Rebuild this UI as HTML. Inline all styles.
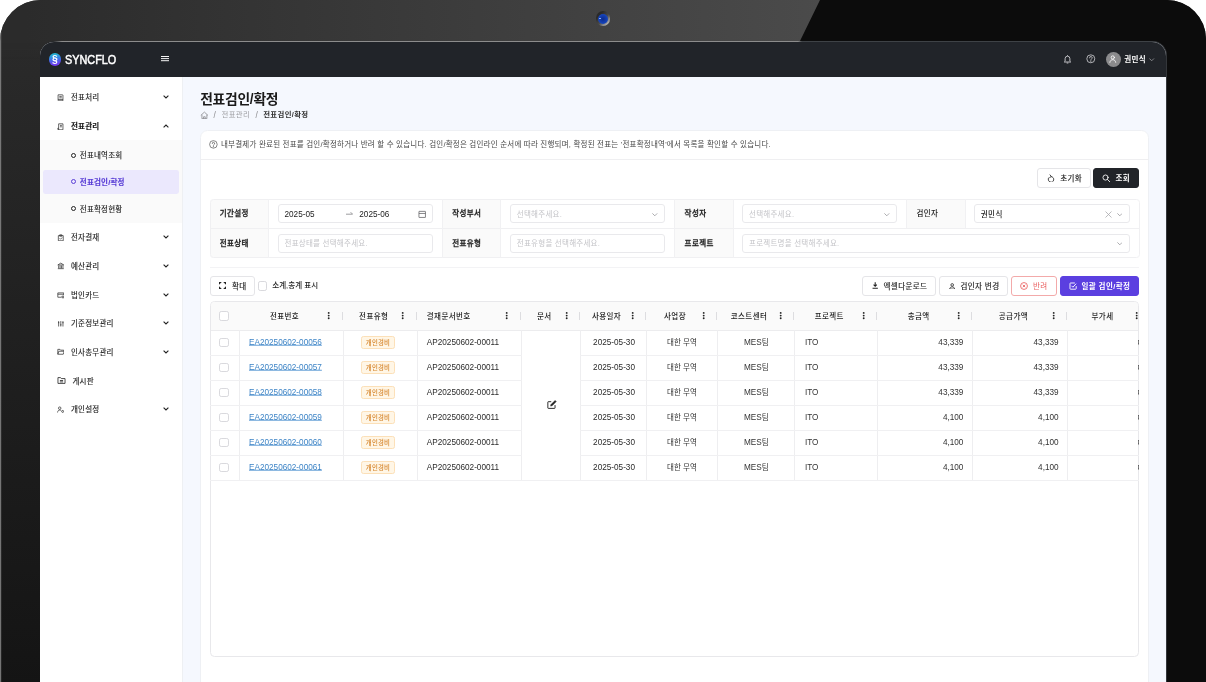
<!DOCTYPE html><html lang="ko"><head><meta charset="utf-8"><title>전표검인/확정</title><style>
*{box-sizing:border-box;margin:0;padding:0}
html,body{width:1206px;height:682px;overflow:hidden;background:#fff}
body{position:relative;font-family:"Liberation Sans","Noto Sans CJK KR",sans-serif;color:#222;-webkit-font-smoothing:antialiased}
.a{position:absolute}
.k{font-size:7.5px;letter-spacing:0.4px;white-space:nowrap;line-height:10px;padding-top:1.500px}
.n{font-size:8.2px;letter-spacing:0;white-space:nowrap;line-height:10px;padding-top:.5px}
.b{font-weight:700}
.m{font-weight:500}
.sb{font-weight:500;-webkit-text-stroke:.28px currentColor}
#dev{left:0;top:0;width:1206px;height:760px;border-radius:41px 39px 0 0;overflow:hidden;
 background:linear-gradient(180deg,#2b2b2b 0%,#2a2a2a 6%,#141414 90%)}
#scr{left:40px;top:41.900px;width:1126px;height:700px;border-radius:14px 14px 0 0;overflow:hidden;background:#f5f8fe}
#pg{left:-40px;top:-41.900px;width:1206px;height:760px;will-change:transform}
.mi{left:40px;width:142px;height:28.7px}
.mi .tx{left:31px;top:50%;transform:translateY(-50%);margin-top:.5px;letter-spacing:.2px;-webkit-text-stroke:.14px currentColor;color:#1c1c1c}
.mi svg.ic{position:absolute;left:16.800px;top:50%;margin-top:-3.700px;width:7.600px;height:7.600px}
.mi svg.ch{position:absolute;left:123px;top:50%;margin-top:-2px;width:6px;height:4px}
.sm .tx{left:39.8px}
.sm .bu{position:absolute;left:30.800px;top:50%;margin-top:-2.300px;width:5px;height:5px;border:.95px solid #333;border-radius:50%}
.lab{background:#fafafa;width:58.4px;height:29.3px}
.lab span{position:absolute;left:10.2px;top:50%;transform:translateY(-50%)}
.inp{height:19.200px;border:1px solid #e9e9ec;border-radius:3px;background:#fff}
.inp span{position:absolute;left:5.600px;top:50%;transform:translateY(-50%);margin-top:.35px}
.ph{color:#c4c4c8;letter-spacing:0.25px}
.btn{height:19.6px;border:1px solid #e5e5e8;border-radius:3px;background:#fff;display:flex;align-items:center;justify-content:center;top:276.1px}
.btn svg{margin-right:4.500px}
.btn .w{-webkit-text-stroke:.16px currentColor;margin-left:.9px;margin-right:-.9px}
.cb{width:9.4px;height:9.4px;border:1px solid #d9d9dd;border-radius:2.2px;background:#fff}
.hs{top:311.8px;width:1.400px;height:8px;background:#dddde0}
.hd{top:312.4px;width:1.400px;height:7px;overflow:visible}
.vb{top:330.3px;width:1px;background:#eeeef0}
.hb{left:209.5px;height:1px;background:#f0f0f2}
.tc{transform:translate(-50%,-50%)}
.tl{transform:translateY(-50%)}
.tr{transform:translate(-100%,-50%)}
.bdg{width:34px;height:12.6px;border:1px solid #fce0b8;background:#fff6e6;border-radius:2.4px;color:#d6852a;font-size:6.4px;letter-spacing:0.2px;line-height:12px;text-align:center;white-space:nowrap}
</style></head><body>
<div id="dev" class="a">
<div class="a" style="left:0;top:0;width:830px;height:60px;background:linear-gradient(90deg,#2b2b2b 0%,#2b2b2b 3%,#4b4b4b 100%);-webkit-mask-image:linear-gradient(180deg,#000 0,#000 40px,transparent 60px)"></div>
<svg class="a" style="left:0;top:0" width="1206" height="760"><polygon points="820,0 1206,0 1206,760 1166,760 1166,42 799.500,42" fill="#0c0c0c"/><rect x="1140" y="40" width="28" height="30" fill="#0c0c0c"/><rect x="0" y="32" width="1.200" height="740" fill="#8c8c8c" opacity=".8"/></svg>
<div class="a" style="left:596px;top:11.3px;width:14.4px;height:14.4px;border-radius:50%;background:linear-gradient(135deg,#2a2a2a 25%,#4a4a4a 55%,#9a9a9a 78%,#f0f0f0 100%)"></div>
<div class="a" style="left:598.2px;top:13.5px;width:10px;height:10px;border-radius:50%;background:radial-gradient(circle at 50% 50%,#0b2a8c 0%,#1440b4 55%,#1f52cc 100%)"></div>
<div class="a" style="left:599.300px;top:17.900px;width:1.500px;height:1.500px;border-radius:50%;background:#9cc0ff"></div>
<div class="a" style="left:40px;top:40.900px;width:1126.700px;height:730px;border-radius:14.500px 14.500px 0 0;background:linear-gradient(90deg,#27292c 0,#27292c 13px,#8c8c8c 22px,#8c8c8c 758px,#3e4246 762px,#3e4246 1112px,#33363a 1126px)"></div>
</div>
<div id="scr" class="a"><div id="pg" class="a">
<div class="a" style="left:40px;top:41px;width:1126px;height:36.400px;background:#212429"></div>
<div class="a" style="left:48.500px;top:53.200px;width:12.600px;height:12.600px;border-radius:50%;background:linear-gradient(172deg,#22c4cc 0%,#2c9adf 28%,#4766e8 55%,#6a40ee 80%,#7a36f2 100%)"></div>
<div class="a b" style="left:54.800px;top:59.500px;transform:translate(-50%,-50%);color:#fff;font-size:10.400px;line-height:1">§</div>
<div class="a" style="left:65.200px;top:59.700px;transform:translateY(-50%) scaleX(.855);transform-origin:0 50%;color:#fff;font-size:12.700px;line-height:1;letter-spacing:0;-webkit-text-stroke:.5px #fff">SYNCFLO</div>
<svg class="a" style="left:161px;top:56px" width="8" height="6" viewBox="0 0 8 6"><path d="M0 .5h8M0 2.600h8M0 4.700h8" stroke="#f4f4f4" stroke-width="1"/></svg>
<svg class="a" style="left:1062.5px;top:53.500px" width="9" height="10" viewBox="0 0 18 20" fill="none" stroke="#c4c4c8" stroke-width="1.9" stroke-linejoin="round"><path d="M9 2.2v1.6M4.2 14.5V9.3a4.8 4.8 0 019.6 0v5.2l1.6 1.5H2.6zM7.3 18h3.4" /></svg>
<svg class="a" style="left:1086.2px;top:54.2px" width="9.6" height="9.6" viewBox="0 0 20 20" fill="none" stroke="#cfcfd3" stroke-width="1.7"><circle cx="10" cy="10" r="8.3"/><path d="M7.4 8.1a2.7 2.7 0 115 1.3c-.7 1-2.3 1.3-2.3 2.9M10 14.2v1.4" stroke-linecap="round"/></svg>
<div class="a" style="left:1105.6px;top:51.9px;width:15.2px;height:15.2px;border-radius:50%;background:#8b8b8d"></div>
<svg class="a" style="left:1109.4px;top:55.4px" width="7.6" height="8" viewBox="0 0 16 17" fill="none" stroke="#fff" stroke-width="1.8" stroke-linecap="round"><circle cx="8" cy="5.2" r="3.4"/><path d="M1.8 15.6c.5-3.6 2.9-5.6 6.2-5.6s5.700 2 6.200 5.600"/></svg>
<div class="a k b" style="left:1124.2px;top:59.4px;transform:translateY(-50%);color:#fff;font-size:7.5px">권민식</div>
<svg class="a" style="left:1149.2px;top:57.8px" width="5.4" height="3.4" viewBox="0 0 5.4 3.4"><path d="M.4.5l2.300 2.300L5 .5" fill="none" stroke="#9a9ca0" stroke-width=".8"/></svg>
<div class="a" style="left:40px;top:77.200px;width:142.800px;height:700px;background:#fff;border-right:1px solid #eef0f3"></div>
<div class="a" style="left:40px;top:140.2px;width:142px;height:83.2px;background:#fafafa"></div>
<div class="a" style="left:43px;top:170px;width:135.800px;height:23.7px;background:#ebe8fd;border-radius:2.4px"></div>
<div class="a mi" style="top:83.15px"><svg class="ic" viewBox="0 0 14 14" fill="none" stroke="#2a2a2a" stroke-width="1.300" stroke-linejoin="round"><path d="M2 1.500h8a1 1 0 011 1V12.500H3a1 1 0 01-1-1zM4.300 4.500h4.500M4.300 7h4.500M2 10h9" /></svg><span class="a tx k ">전표처리</span><svg class="ch" viewBox="0 0 6 4"><path d="M.6.600L3 3l2.400-2.400" fill="none" stroke="#222" stroke-width="1.1"/></svg></div>
<div class="a mi" style="top:111.95px"><svg class="ic" viewBox="0 0 14 14" fill="none" stroke="#2a2a2a" stroke-width="1.300" stroke-linejoin="round"><path d="M3 1.500h8v11H3zM3 9.500H1.500v2.000a1 1 0 001 1H4M5.500 4.500h3.500M5.500 7h3.500"/></svg><span class="a tx k b">전표관리</span><svg class="ch" viewBox="0 0 6 4"><path d="M.6 3.400L3 1l2.400 2.400" fill="none" stroke="#222" stroke-width="1.1"/></svg></div>
<div class="a mi sm" style="top:140.85px"><i class="bu" style="border-color:#222"></i><span class="a tx k " style="color:#222">전표내역조회</span></div>
<div class="a mi sm" style="top:167.45px"><i class="bu" style="border-color:#5a3fd6"></i><span class="a tx k b" style="color:#5a3fd6">전표검인/확정</span></div>
<div class="a mi sm" style="top:194.35px"><i class="bu" style="border-color:#222"></i><span class="a tx k " style="color:#222">전표확정현황</span></div>
<div class="a mi" style="top:222.95px"><svg class="ic" viewBox="0 0 14 14" fill="none" stroke="#2a2a2a" stroke-width="1.300" stroke-linejoin="round"><path d="M2.500 3h9v9.500h-9zM5 1.500h4v2.500H5zM4.800 8l1.700 1.700L9.500 6.500"/></svg><span class="a tx k ">전자결재</span><svg class="ch" viewBox="0 0 6 4"><path d="M.6.600L3 3l2.400-2.400" fill="none" stroke="#222" stroke-width="1.1"/></svg></div>
<div class="a mi" style="top:251.55px"><svg class="ic" viewBox="0 0 14 14" fill="none" stroke="#2a2a2a" stroke-width="1.300" stroke-linejoin="round"><path d="M1.500 5.500L7 2l5.500 3.500zM3 6.500v5M5.700 6.500v5M8.300 6.500v5M11 6.500v5M1.500 12.300h11"/></svg><span class="a tx k ">예산관리</span><svg class="ch" viewBox="0 0 6 4"><path d="M.6.600L3 3l2.400-2.400" fill="none" stroke="#222" stroke-width="1.1"/></svg></div>
<div class="a mi" style="top:280.25px"><svg class="ic" viewBox="0 0 14 14" fill="none" stroke="#2a2a2a" stroke-width="1.300" stroke-linejoin="round"><path d="M1.500 3.500h11v4M1.500 3.500v8h6M1.500 6h11M9 9.500h4v3H9z"/></svg><span class="a tx k ">법인카드</span><svg class="ch" viewBox="0 0 6 4"><path d="M.6.600L3 3l2.400-2.400" fill="none" stroke="#222" stroke-width="1.1"/></svg></div>
<div class="a mi" style="top:308.95px"><svg class="ic" viewBox="0 0 14 14" fill="none" stroke="#2a2a2a" stroke-width="1.300" stroke-linejoin="round"><path d="M3 2v10M7 2v10M11 2v10M1.800 5h2.400M5.800 9h2.400M9.800 5h2.400"/></svg><span class="a tx k ">기준정보관리</span><svg class="ch" viewBox="0 0 6 4"><path d="M.6.600L3 3l2.400-2.400" fill="none" stroke="#222" stroke-width="1.1"/></svg></div>
<div class="a mi" style="top:337.55px"><svg class="ic" viewBox="0 0 14 14" fill="none" stroke="#2a2a2a" stroke-width="1.300" stroke-linejoin="round"><path d="M1.500 11.500V2.500h4l1.200 1.500h5.800v2M1.500 11.500l1.800-5.500h10l-1.800 5.500z"/></svg><span class="a tx k ">인사총무관리</span><svg class="ch" viewBox="0 0 6 4"><path d="M.6.600L3 3l2.400-2.400" fill="none" stroke="#222" stroke-width="1.1"/></svg></div>
<div class="a mi" style="top:366.25px"><svg class="ic" style="width:9px;height:9px;margin-top:-4.400px;left:16.600px" viewBox="0 0 14 14" fill="none" stroke="#2a2a2a" stroke-width="1.300" stroke-linejoin="round"><path d="M1.500 11.500V2.500h4l1.200 1.500h5.800v7.500zM4.500 7h5M4.500 9.200h5"/></svg><span class="a tx k " style="left:32.5px">게시판</span></div>
<div class="a mi" style="top:394.95px"><svg class="ic" viewBox="0 0 14 14" fill="none" stroke="#2a2a2a" stroke-width="1.300" stroke-linejoin="round"><circle cx="5" cy="4" r="2.300"/><path d="M1 12c.3-3 1.800-4.500 4-4.500 1.300 0 2.300.5 3 1.500"/><circle cx="10.500" cy="10" r="1.800"/></svg><span class="a tx k ">개인설정</span><svg class="ch" viewBox="0 0 6 4"><path d="M.6.600L3 3l2.400-2.400" fill="none" stroke="#222" stroke-width="1.1"/></svg></div>
<div class="a b" style="left:200.2px;top:99.900px;transform:translateY(-50%);font-size:13.8px;letter-spacing:-0.28px;line-height:1;color:#1a1a1a;white-space:nowrap">전표검인/확정</div>
<svg class="a" style="left:199.900px;top:110.500px" width="8.800" height="8.800" viewBox="0 0 16 16" fill="none" stroke="#77777b" stroke-width="1.250" stroke-linejoin="round"><path d="M1.500 8L8 2l6.500 6M3.500 6.800V14h9V6.800M6.500 14v-3.500h3V14"/></svg>
<div class="a k" style="left:213.5px;top:114.8px;transform:translateY(-50%);color:#8a8a8e;font-size:8.400px">/</div>
<div class="a k" style="left:221.6px;top:114.8px;transform:translateY(-50%);color:#9c9ca0;font-size:7.4px;letter-spacing:0.3px">전표관리</div>
<div class="a k" style="left:255.6px;top:114.8px;transform:translateY(-50%);color:#8a8a8e;font-size:8.400px">/</div>
<div class="a k b" style="left:263.2px;top:114.8px;transform:translateY(-50%);color:#333;font-size:7.4px;letter-spacing:0.35px">전표검인/확정</div>
<div class="a" style="left:200.3px;top:130.3px;width:948.3px;height:640px;background:#fff;border:1px solid #eef0f4;border-radius:7.5px"></div>
<div class="a" style="left:200.3px;top:159px;width:948.3px;height:1px;background:#efeff1"></div>
<svg class="a" style="left:209.400px;top:140.200px" width="8.800" height="8.800" viewBox="0 0 20 20" fill="none" stroke="#4a4a4a" stroke-width="1.500"><circle cx="10" cy="10" r="8.600"/><path d="M7.400 8.100a2.700 2.700 0 115 1.300c-.7 1-2.300 1.300-2.300 2.900M10 14.400v1.200" stroke-linecap="round"/></svg>
<div class="a k" style="left:221px;top:144.6px;transform:translateY(-50%);color:#484848;font-size:7.5px;letter-spacing:0.22px">내부결제가 완료된 전표를 검인/확정하거나 반려 할 수 있습니다. 검인/확정은 검인라인 순서에 따라 진행되며, 확정된 전표는 '전표확정내역'에서 목록을 확인할 수 있습니다.</div>
<div class="a btn" style="left:1037.400px;top:168.2px;width:53.300px"><svg width="7.800" height="8.900" viewBox="0 0 14 16" fill="none" stroke="#333" stroke-width="1.600" stroke-linecap="round"><path d="M7.600 4.600a5 5 0 1 1-4.900 2.600"/><path d="M5.400 1.600l2.400 3-3 1.800" stroke-linejoin="round"/></svg><span class="k w" style="color:#1c1c1c">초기화</span></div>
<div class="a btn" style="left:1093.1px;top:168.2px;width:46.2px;background:#212429;border-color:#212429"><svg width="8.600" height="8.600" viewBox="0 0 16 16" fill="none" stroke="#fff" stroke-width="1.600" stroke-linecap="round"><circle cx="6.600" cy="6.600" r="4.800"/><path d="M10.300 10.300L14.500 14.500"/></svg><span class="k b" style="color:#fff">조회</span></div>
<div class="a lab" style="left:209.50px;top:199.2px"></div>
<div class="a lab" style="left:441.95px;top:199.2px"></div>
<div class="a lab" style="left:674.40px;top:199.2px"></div>
<div class="a lab" style="left:906.30px;top:199.2px"></div>
<div class="a lab" style="left:209.50px;top:228.5px"></div>
<div class="a lab" style="left:441.95px;top:228.5px"></div>
<div class="a lab" style="left:674.40px;top:228.5px"></div>
<div class="a" style="left:209.5px;top:228.3px;width:929.8px;height:1px;background:#f0f0f2"></div>
<div class="a" style="left:209.5px;top:199.2px;width:930.300px;height:58.600px;border:1px solid #f0f0f2;border-radius:3.500px;box-shadow:0 0 0 2px #fff"></div>
<div class="a k sb" style="left:219.70px;top:213.8px;transform:translateY(-50%);color:#222">기간설정</div>
<div class="a k sb" style="left:452.15px;top:213.8px;transform:translateY(-50%);color:#222">작성부서</div>
<div class="a k sb" style="left:684.60px;top:213.8px;transform:translateY(-50%);color:#222">작성자</div>
<div class="a k m" style="left:916.50px;top:213.8px;transform:translateY(-50%);color:#222">검인자</div>
<div class="a k sb" style="left:219.70px;top:243.4px;transform:translateY(-50%);color:#222">전표상태</div>
<div class="a k sb" style="left:452.15px;top:243.4px;transform:translateY(-50%);color:#222">전표유형</div>
<div class="a k sb" style="left:684.60px;top:243.4px;transform:translateY(-50%);color:#222">프로젝트</div>
<div class="a inp" style="left:277.900px;top:204.100px;width:155px"><span class="n" style="color:#222">2025-05</span><span class="n" style="left:80.400px;color:#222">2025-06</span><svg class="a" style="left:67.600px;top:6.300px" width="7" height="5" viewBox="0 0 7 5" fill="none" stroke="#848488" stroke-width=".8"><path d="M0 3.200h6.600M4.600 1.200l2 2"/></svg><svg class="a" style="left:139.200px;top:5.400px" width="8.400" height="8.400" viewBox="0 0 16 16" fill="none" stroke="#5a5a5e" stroke-width="1.400"><rect x="1.800" y="2.600" width="12.400" height="11.600" rx=".4"/><path d="M1.800 6.600h12.400"/></svg></div>
<div class="a inp" style="left:510.200px;top:204.100px;width:155px"><span class="k ph">선택해주세요.</span><svg class="a" style="right:6.600px;top:7.600px" width="5.600" height="3.500" viewBox="0 0 5.600 3.500"><path d="M.4.400l2.400 2.400L5.200.4" fill="none" stroke="#97979b" stroke-width=".8"/></svg></div>
<div class="a inp" style="left:742.400px;top:204.100px;width:155px"><span class="k ph">선택해주세요.</span><svg class="a" style="right:6.600px;top:7.600px" width="5.600" height="3.500" viewBox="0 0 5.600 3.500"><path d="M.4.400l2.400 2.400L5.200.4" fill="none" stroke="#97979b" stroke-width=".8"/></svg></div>
<div class="a inp" style="left:974.200px;top:204.100px;width:155.800px"><span class="k m" style="color:#222">권민식</span><svg class="a" style="right:6.600px;top:7.600px" width="5.600" height="3.500" viewBox="0 0 5.600 3.500"><path d="M.4.400l2.400 2.400L5.200.4" fill="none" stroke="#97979b" stroke-width=".8"/></svg><svg class="a" style="right:17.200px;top:5.700px" width="7" height="7" viewBox="0 0 7 7"><path d="M.5.500l6 6M6.500.500l-6 6" stroke="#a6a6aa" stroke-width=".75"/></svg></div>
<div class="a inp" style="left:277.900px;top:233.800px;width:155px"><span class="k ph">전표상태를 선택해주세요.</span></div>
<div class="a inp" style="left:510.200px;top:233.800px;width:155px"><span class="k ph">전표유형을 선택해주세요.</span></div>
<div class="a inp" style="left:742.400px;top:233.800px;width:387.600px"><span class="k ph">프로젝트명을 선택해주세요.</span><svg class="a" style="right:6.600px;top:7.600px" width="5.600" height="3.500" viewBox="0 0 5.600 3.500"><path d="M.4.400l2.400 2.400L5.200.4" fill="none" stroke="#97979b" stroke-width=".8"/></svg></div>
<div class="a" style="left:267.70px;top:199.2px;width:1px;height:58.6px;background:#f1f1f3"></div>
<div class="a" style="left:500.15px;top:199.2px;width:1px;height:58.6px;background:#f1f1f3"></div>
<div class="a" style="left:441.65px;top:199.2px;width:1px;height:58.6px;background:#f1f1f3"></div>
<div class="a" style="left:732.60px;top:199.2px;width:1px;height:58.6px;background:#f1f1f3"></div>
<div class="a" style="left:674.10px;top:199.2px;width:1px;height:58.6px;background:#f1f1f3"></div>
<div class="a" style="left:964.50px;top:199.2px;width:1px;height:29.3px;background:#f1f1f3"></div>
<div class="a" style="left:906.00px;top:199.2px;width:1px;height:29.3px;background:#f1f1f3"></div>
<div class="a" style="left:209.5px;top:267px;width:929.8px;height:1px;background:#f3f3f5"></div>
<div class="a btn"  style="left:209.5px;width:45.2px"><svg style="margin-right:5.500px" width="7" height="7" viewBox="0 0 12 12" fill="#222"><path d="M0 0h4.800L0 4.800zM12 0v4.800L7.200 0zM0 12V7.200L4.800 12zM12 12H7.200L12 7.200z"/></svg><span class="k w" style="color:#1c1c1c">확대</span></div>
<div class="a cb" style="left:258px;top:281.2px"></div>
<div class="a k m" style="left:272.2px;top:285.9px;transform:translateY(-50%);color:#222;letter-spacing:0.05px">소계,총계 표시</div>
<div class="a btn" style="left:862.4px;width:73.500px"><svg width="6.400" height="7" viewBox="0 0 12 13" fill="none" stroke="#222" stroke-width="2"><path d="M6 .5v7M3 5l3 3 3-3M1 11.800h10"/></svg><span class="k w" style="color:#1c1c1c">엑셀다운로드</span></div>
<div class="a btn" style="left:939.3px;width:68.7px"><svg width="6.400" height="6.600" viewBox="0 0 12 13" fill="none" stroke="#333" stroke-width="1.700"><circle cx="6" cy="3.800" r="2.600"/><path d="M1 12c.4-3 2.300-4.300 5-4.300s4.600 1.300 5 4.300z"/></svg><span class="k w" style="color:#1c1c1c">검인자 변경</span></div>
<div class="a btn" style="left:1011.3px;width:45.4px;border-color:#f3aaaa"><svg width="8" height="8" viewBox="0 0 14 14" fill="none" stroke="#ea6464" stroke-width="1.500"><circle cx="7" cy="7" r="6"/><path d="M4.800 4.800l4.400 4.400M9.200 4.800l-4.400 4.400"/></svg><span class="k" style="color:#ea6262">반려</span></div>
<div class="a btn" style="left:1059.8px;width:79.5px;background:#5b3fe0;border-color:#5b3fe0"><svg width="8.200" height="8.200" viewBox="0 0 14 14" fill="none" stroke="#fff" stroke-width="1.600"><path d="M12.300 7v4.300a1 1 0 01-1 1H2.700a1 1 0 01-1-1V2.700a1 1 0 011-1H10M4.300 6.500l2.400 2.400 5.500-6"/></svg><span class="k b" style="color:#fff">일괄 검인/확정</span></div>
<div class="a" style="left:209.5px;top:301.2px;width:929.8px;height:356px;border:1px solid #e8e8eb;border-radius:4.500px;background:#fff;overflow:hidden"><div class="a" style="left:0;top:0;width:930px;height:29.100px;background:#fafafa;border-bottom:1px solid #ececee"></div></div>
<div class="a vb" style="left:239.10px;height:150.30px"></div>
<div class="a vb" style="left:343.00px;height:150.30px"></div>
<div class="a hs" style="left:341.90px"></div>
<div class="a vb" style="left:417.10px;height:150.30px"></div>
<div class="a hs" style="left:416.00px"></div>
<div class="a vb" style="left:521.10px;height:150.30px"></div>
<div class="a hs" style="left:520.00px"></div>
<div class="a vb" style="left:579.90px;height:150.30px"></div>
<div class="a hs" style="left:578.80px"></div>
<div class="a vb" style="left:646.00px;height:150.30px"></div>
<div class="a hs" style="left:644.90px"></div>
<div class="a vb" style="left:717.00px;height:150.30px"></div>
<div class="a hs" style="left:715.90px"></div>
<div class="a vb" style="left:794.00px;height:150.30px"></div>
<div class="a hs" style="left:792.90px"></div>
<div class="a vb" style="left:877.00px;height:150.30px"></div>
<div class="a hs" style="left:875.90px"></div>
<div class="a vb" style="left:972.00px;height:150.30px"></div>
<div class="a hs" style="left:970.90px"></div>
<div class="a vb" style="left:1067.10px;height:150.30px"></div>
<div class="a hs" style="left:1066.00px"></div>
<div class="a hb" style="top:354.85px;width:312.10px"></div>
<div class="a hb" style="top:354.85px;left:580.4px;width:558.40px"></div>
<div class="a hb" style="top:379.90px;width:312.10px"></div>
<div class="a hb" style="top:379.90px;left:580.4px;width:558.40px"></div>
<div class="a hb" style="top:404.95px;width:312.10px"></div>
<div class="a hb" style="top:404.95px;left:580.4px;width:558.40px"></div>
<div class="a hb" style="top:430.00px;width:312.10px"></div>
<div class="a hb" style="top:430.00px;left:580.4px;width:558.40px"></div>
<div class="a hb" style="top:455.05px;width:312.10px"></div>
<div class="a hb" style="top:455.05px;left:580.4px;width:558.40px"></div>
<div class="a hb" style="top:480.10px;width:929.30px"></div>
<div class="a cb" style="left:219.3px;top:311.3px"></div>
<div class="a k m tc" style="left:284.50px;top:316.00px;color:#222">전표번호</div>
<svg class="a hd" style="left:328.10px" width="1.400" height="7" viewBox="0 0 1.400 7"><circle cx=".7" cy=".9" r=".95" fill="#222"/><circle cx=".7" cy="3.600" r=".95" fill="#222"/><circle cx=".7" cy="6.300" r=".95" fill="#222"/></svg>
<div class="a k m tc" style="left:373.70px;top:316.00px;color:#222">전표유형</div>
<svg class="a hd" style="left:402.30px" width="1.400" height="7" viewBox="0 0 1.400 7"><circle cx=".7" cy=".9" r=".95" fill="#222"/><circle cx=".7" cy="3.600" r=".95" fill="#222"/><circle cx=".7" cy="6.300" r=".95" fill="#222"/></svg>
<div class="a k m tl" style="left:426.80px;top:316.00px;color:#222">결재문서번호</div>
<svg class="a hd" style="left:506.30px" width="1.400" height="7" viewBox="0 0 1.400 7"><circle cx=".7" cy=".9" r=".95" fill="#222"/><circle cx=".7" cy="3.600" r=".95" fill="#222"/><circle cx=".7" cy="6.300" r=".95" fill="#222"/></svg>
<div class="a k m tc" style="left:544.30px;top:316.00px;color:#222">문서</div>
<svg class="a hd" style="left:566.10px" width="1.400" height="7" viewBox="0 0 1.400 7"><circle cx=".7" cy=".9" r=".95" fill="#222"/><circle cx=".7" cy="3.600" r=".95" fill="#222"/><circle cx=".7" cy="6.300" r=".95" fill="#222"/></svg>
<div class="a k m tc" style="left:606.50px;top:316.00px;color:#222">사용일자</div>
<svg class="a hd" style="left:631.50px" width="1.400" height="7" viewBox="0 0 1.400 7"><circle cx=".7" cy=".9" r=".95" fill="#222"/><circle cx=".7" cy="3.600" r=".95" fill="#222"/><circle cx=".7" cy="6.300" r=".95" fill="#222"/></svg>
<div class="a k m tc" style="left:675.00px;top:316.00px;color:#222">사업장</div>
<svg class="a hd" style="left:702.60px" width="1.400" height="7" viewBox="0 0 1.400 7"><circle cx=".7" cy=".9" r=".95" fill="#222"/><circle cx=".7" cy="3.600" r=".95" fill="#222"/><circle cx=".7" cy="6.300" r=".95" fill="#222"/></svg>
<div class="a k m tc" style="left:749.00px;top:316.00px;color:#222">코스트센터</div>
<svg class="a hd" style="left:779.80px" width="1.400" height="7" viewBox="0 0 1.400 7"><circle cx=".7" cy=".9" r=".95" fill="#222"/><circle cx=".7" cy="3.600" r=".95" fill="#222"/><circle cx=".7" cy="6.300" r=".95" fill="#222"/></svg>
<div class="a k m tc" style="left:829.30px;top:316.00px;color:#222">프로젝트</div>
<svg class="a hd" style="left:862.70px" width="1.400" height="7" viewBox="0 0 1.400 7"><circle cx=".7" cy=".9" r=".95" fill="#222"/><circle cx=".7" cy="3.600" r=".95" fill="#222"/><circle cx=".7" cy="6.300" r=".95" fill="#222"/></svg>
<div class="a k m tc" style="left:918.70px;top:316.00px;color:#222">총금액</div>
<svg class="a hd" style="left:957.90px" width="1.400" height="7" viewBox="0 0 1.400 7"><circle cx=".7" cy=".9" r=".95" fill="#222"/><circle cx=".7" cy="3.600" r=".95" fill="#222"/><circle cx=".7" cy="6.300" r=".95" fill="#222"/></svg>
<div class="a k m tc" style="left:1013.40px;top:316.00px;color:#222">공급가액</div>
<svg class="a hd" style="left:1052.90px" width="1.400" height="7" viewBox="0 0 1.400 7"><circle cx=".7" cy=".9" r=".95" fill="#222"/><circle cx=".7" cy="3.600" r=".95" fill="#222"/><circle cx=".7" cy="6.300" r=".95" fill="#222"/></svg>
<div class="a k m tc" style="left:1102.50px;top:316.00px;color:#222">부가세</div>
<svg class="a hd" style="left:1136.10px" width="1.400" height="7" viewBox="0 0 1.400 7"><circle cx=".7" cy=".9" r=".95" fill="#222"/><circle cx=".7" cy="3.600" r=".95" fill="#222"/><circle cx=".7" cy="6.300" r=".95" fill="#222"/></svg>
<div class="a cb" style="left:219.3px;top:337.82px"></div>
<div class="a n tl" style="left:249px;top:342.52px;color:#3d84c6;text-decoration:underline;text-decoration-thickness:.5px;text-underline-offset:.15px;text-decoration-color:#6aa3d8">EA20250602-00056</div>
<div class="a bdg m" style="left:361px;top:336.22px">개인경비</div>
<div class="a n tl" style="left:426.8px;top:342.52px;color:#2a2a2a">AP20250602-00011</div>
<div class="a n tl" style="left:593.1px;top:342.52px;color:#2a2a2a">2025-05-30</div>
<div class="a k tc" style="left:682px;top:342.52px;color:#333;letter-spacing:0.05px">대한 무역</div>
<div class="a n tc" style="left:756.5px;top:342.52px;color:#333"><span>MES</span><span class="k">팀</span></div>
<div class="a n tl" style="left:804.9px;top:342.52px;color:#333">ITO</div>
<div class="a n tr" style="left:963.4px;top:342.52px;color:#333">43,339</div>
<div class="a n tr" style="left:1058.6px;top:342.52px;color:#333">43,339</div>
<div class="a" style="left:1137.600px;top:339.52px;width:1.200px;height:6px;overflow:hidden"><span class="a n" style="left:0;top:-2px;color:#333">0</span></div>
<div class="a cb" style="left:219.3px;top:362.88px"></div>
<div class="a n tl" style="left:249px;top:367.57px;color:#3d84c6;text-decoration:underline;text-decoration-thickness:.5px;text-underline-offset:.15px;text-decoration-color:#6aa3d8">EA20250602-00057</div>
<div class="a bdg m" style="left:361px;top:361.27px">개인경비</div>
<div class="a n tl" style="left:426.8px;top:367.57px;color:#2a2a2a">AP20250602-00011</div>
<div class="a n tl" style="left:593.1px;top:367.57px;color:#2a2a2a">2025-05-30</div>
<div class="a k tc" style="left:682px;top:367.57px;color:#333;letter-spacing:0.05px">대한 무역</div>
<div class="a n tc" style="left:756.5px;top:367.57px;color:#333"><span>MES</span><span class="k">팀</span></div>
<div class="a n tl" style="left:804.9px;top:367.57px;color:#333">ITO</div>
<div class="a n tr" style="left:963.4px;top:367.57px;color:#333">43,339</div>
<div class="a n tr" style="left:1058.6px;top:367.57px;color:#333">43,339</div>
<div class="a" style="left:1137.600px;top:364.57px;width:1.200px;height:6px;overflow:hidden"><span class="a n" style="left:0;top:-2px;color:#333">0</span></div>
<div class="a cb" style="left:219.3px;top:387.93px"></div>
<div class="a n tl" style="left:249px;top:392.62px;color:#3d84c6;text-decoration:underline;text-decoration-thickness:.5px;text-underline-offset:.15px;text-decoration-color:#6aa3d8">EA20250602-00058</div>
<div class="a bdg m" style="left:361px;top:386.32px">개인경비</div>
<div class="a n tl" style="left:426.8px;top:392.62px;color:#2a2a2a">AP20250602-00011</div>
<div class="a n tl" style="left:593.1px;top:392.62px;color:#2a2a2a">2025-05-30</div>
<div class="a k tc" style="left:682px;top:392.62px;color:#333;letter-spacing:0.05px">대한 무역</div>
<div class="a n tc" style="left:756.5px;top:392.62px;color:#333"><span>MES</span><span class="k">팀</span></div>
<div class="a n tl" style="left:804.9px;top:392.62px;color:#333">ITO</div>
<div class="a n tr" style="left:963.4px;top:392.62px;color:#333">43,339</div>
<div class="a n tr" style="left:1058.6px;top:392.62px;color:#333">43,339</div>
<div class="a" style="left:1137.600px;top:389.62px;width:1.200px;height:6px;overflow:hidden"><span class="a n" style="left:0;top:-2px;color:#333">0</span></div>
<div class="a cb" style="left:219.3px;top:412.98px"></div>
<div class="a n tl" style="left:249px;top:417.68px;color:#3d84c6;text-decoration:underline;text-decoration-thickness:.5px;text-underline-offset:.15px;text-decoration-color:#6aa3d8">EA20250602-00059</div>
<div class="a bdg m" style="left:361px;top:411.38px">개인경비</div>
<div class="a n tl" style="left:426.8px;top:417.68px;color:#2a2a2a">AP20250602-00011</div>
<div class="a n tl" style="left:593.1px;top:417.68px;color:#2a2a2a">2025-05-30</div>
<div class="a k tc" style="left:682px;top:417.68px;color:#333;letter-spacing:0.05px">대한 무역</div>
<div class="a n tc" style="left:756.5px;top:417.68px;color:#333"><span>MES</span><span class="k">팀</span></div>
<div class="a n tl" style="left:804.9px;top:417.68px;color:#333">ITO</div>
<div class="a n tr" style="left:963.4px;top:417.68px;color:#333">4,100</div>
<div class="a n tr" style="left:1058.6px;top:417.68px;color:#333">4,100</div>
<div class="a" style="left:1137.600px;top:414.68px;width:1.200px;height:6px;overflow:hidden"><span class="a n" style="left:0;top:-2px;color:#333">0</span></div>
<div class="a cb" style="left:219.3px;top:438.02px"></div>
<div class="a n tl" style="left:249px;top:442.72px;color:#3d84c6;text-decoration:underline;text-decoration-thickness:.5px;text-underline-offset:.15px;text-decoration-color:#6aa3d8">EA20250602-00060</div>
<div class="a bdg m" style="left:361px;top:436.42px">개인경비</div>
<div class="a n tl" style="left:426.8px;top:442.72px;color:#2a2a2a">AP20250602-00011</div>
<div class="a n tl" style="left:593.1px;top:442.72px;color:#2a2a2a">2025-05-30</div>
<div class="a k tc" style="left:682px;top:442.72px;color:#333;letter-spacing:0.05px">대한 무역</div>
<div class="a n tc" style="left:756.5px;top:442.72px;color:#333"><span>MES</span><span class="k">팀</span></div>
<div class="a n tl" style="left:804.9px;top:442.72px;color:#333">ITO</div>
<div class="a n tr" style="left:963.4px;top:442.72px;color:#333">4,100</div>
<div class="a n tr" style="left:1058.6px;top:442.72px;color:#333">4,100</div>
<div class="a" style="left:1137.600px;top:439.72px;width:1.200px;height:6px;overflow:hidden"><span class="a n" style="left:0;top:-2px;color:#333">0</span></div>
<div class="a cb" style="left:219.3px;top:463.07px"></div>
<div class="a n tl" style="left:249px;top:467.77px;color:#3d84c6;text-decoration:underline;text-decoration-thickness:.5px;text-underline-offset:.15px;text-decoration-color:#6aa3d8">EA20250602-00061</div>
<div class="a bdg m" style="left:361px;top:461.47px">개인경비</div>
<div class="a n tl" style="left:426.8px;top:467.77px;color:#2a2a2a">AP20250602-00011</div>
<div class="a n tl" style="left:593.1px;top:467.77px;color:#2a2a2a">2025-05-30</div>
<div class="a k tc" style="left:682px;top:467.77px;color:#333;letter-spacing:0.05px">대한 무역</div>
<div class="a n tc" style="left:756.5px;top:467.77px;color:#333"><span>MES</span><span class="k">팀</span></div>
<div class="a n tl" style="left:804.9px;top:467.77px;color:#333">ITO</div>
<div class="a n tr" style="left:963.4px;top:467.77px;color:#333">4,100</div>
<div class="a n tr" style="left:1058.6px;top:467.77px;color:#333">4,100</div>
<div class="a" style="left:1137.600px;top:464.77px;width:1.200px;height:6px;overflow:hidden"><span class="a n" style="left:0;top:-2px;color:#333">0</span></div>
<svg class="a" style="left:547.200px;top:400.200px" width="9.800" height="9.200" viewBox="0 0 19.600 18.400" fill="none" stroke="#222" stroke-width="1.900"><path d="M8.500 3.400H2.600a.9.900 0 00-.9.900v11.600a.9.900 0 00.9.900h12.600a.9.900 0 00.9-.9V10.200"/><path d="M16.200 1l2.200 2.200-8.200 8.200-3 .8.800-3z" fill="#222" stroke-width="1.100"/></svg>
</div></div>
</body></html>
